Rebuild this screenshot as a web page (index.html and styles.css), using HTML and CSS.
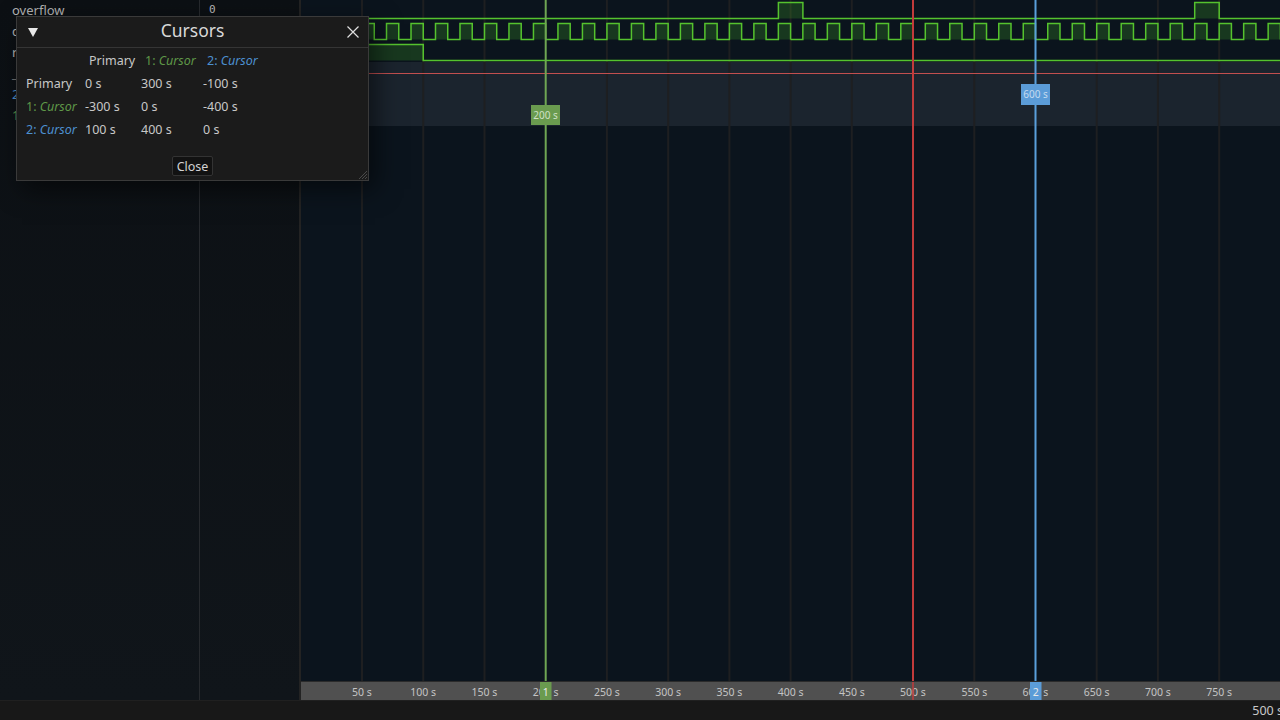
FILE: index.html
```
<!DOCTYPE html>
<html>
<head>
<meta charset="utf-8">
<link rel="stylesheet" href="styles.css">
</head>
<body>
<div class="app">
  <div class="main">
    <div class="names">
      <div class="row">overflow</div>
      <div class="row">clk</div>
      <div class="row">reset</div>
      <div class="row row-div">_____</div>
      <div class="row c-blue">2: <i>Cursor</i></div>
      <div class="row c-green">1: <i>Cursor</i></div>
    </div>
    <div class="values">
      <div class="vrow">0</div>
      <div class="vrow">1</div>
      <div class="vrow">0</div>
    </div>
    <div class="wave">
      <div class="canvas">
        <svg width="979" height="681" viewBox="301 0 979 681">
          <rect x="301" y="0" width="979" height="681" fill="#0b141d"/>
          <rect x="301" y="62" width="979" height="64" fill="#1b242e"/>
          <g stroke="#1e1f21" stroke-width="2">
            <line x1="362" y1="0" x2="362" y2="681"/>
            <line x1="423.25" y1="0" x2="423.25" y2="681"/>
            <line x1="484.5" y1="0" x2="484.5" y2="681"/>
            <line x1="606.9" y1="0" x2="606.9" y2="681"/>
            <line x1="668.2" y1="0" x2="668.2" y2="681"/>
            <line x1="729.4" y1="0" x2="729.4" y2="681"/>
            <line x1="790.6" y1="0" x2="790.6" y2="681"/>
            <line x1="851.8" y1="0" x2="851.8" y2="681"/>
            <line x1="974.3" y1="0" x2="974.3" y2="681"/>
            <line x1="1096.7" y1="0" x2="1096.7" y2="681"/>
            <line x1="1157.9" y1="0" x2="1157.9" y2="681"/>
            <line x1="1219.2" y1="0" x2="1219.2" y2="681"/>
          </g>
          <line x1="301" y1="73.5" x2="1280" y2="73.5" stroke="#c24f4f" stroke-width="1"/>
          <!-- overflow -->
          <rect x="778.4" y="2.5" width="24.5" height="16" fill="rgba(80,200,40,0.2)"/>
          <rect x="1194.7" y="2.5" width="24.5" height="16" fill="rgba(80,200,40,0.2)"/>
          <path d="M301 18.5 H778.4 V2.5 H802.9 V18.5 H1194.7 V2.5 H1219.2 V18.5 H1280" fill="none" stroke="#55c22e" stroke-width="1.5"/>
          <!-- clk: 4 groups of 10 periods, each group 244.9px -->
          <g id="clkgrp">
            <path fill="rgba(80,200,40,0.2)" d="M313.045 23.5h12.245v16h-12.245z m24.49 0h12.245v16h-12.245z m24.49 0h12.245v16h-12.245z m24.49 0h12.245v16h-12.245z m24.49 0h12.245v16h-12.245z m24.49 0h12.245v16h-12.245z m24.49 0h12.245v16h-12.245z m24.49 0h12.245v16h-12.245z m24.49 0h12.245v16h-12.245z m24.49 0h12.245v16h-12.245z"/>
            <path fill="none" stroke="#55c22e" stroke-width="1.5" d="M300.8 39.5h12.245v-16h12.245v16h12.245v-16h12.245v16h12.245v-16h12.245v16h12.245v-16h12.245v16h12.245v-16h12.245v16h12.245v-16h12.245v16h12.245v-16h12.245v16h12.245v-16h12.245v16h12.245v-16h12.245v16h12.245v-16h12.245v16"/>
          </g>
          <use href="#clkgrp" x="244.9" y="0"/>
          <use href="#clkgrp" x="489.8" y="0"/>
          <use href="#clkgrp" x="734.7" y="0"/>
          <!-- reset -->
          <rect x="301" y="44.5" width="122.25" height="16" fill="rgba(80,200,40,0.2)"/>
          <path d="M301 44.5 H423.25 V60.5 H1280" fill="none" stroke="#55c22e" stroke-width="1.5"/>
          <!-- cursors -->
          <line x1="545.7" y1="0" x2="545.7" y2="681" stroke="#6fa653" stroke-width="2"/>
          <line x1="913" y1="0" x2="913" y2="681" stroke="#c23b3b" stroke-width="2"/>
          <line x1="1035.5" y1="0" x2="1035.5" y2="681" stroke="#5a9fdb" stroke-width="2"/>
          <rect x="531" y="105" width="29" height="20" fill="#6a9b4f"/>
          <text x="545.5" y="114.5" class="clabel clabel-g">200 s</text>
          <rect x="1021" y="84" width="29" height="21" fill="#5b9cd8"/>
          <text x="1035.5" y="93.5" class="clabel clabel-b">600 s</text>
        </svg>
      </div>
      <div class="ruler">
        <svg width="979" height="18" viewBox="301 0 979 18">
          <g class="tick">
            <text x="362" y="9.5">50 s</text>
            <text x="423.25" y="9.5">100 s</text>
            <text x="484.5" y="9.5">150 s</text>
            <text x="545.7" y="9.5">200 s</text>
            <text x="606.9" y="9.5">250 s</text>
            <text x="668.2" y="9.5">300 s</text>
            <text x="729.4" y="9.5">350 s</text>
            <text x="790.6" y="9.5">400 s</text>
            <text x="851.8" y="9.5">450 s</text>
            <text x="913" y="9.5">500 s</text>
            <text x="974.3" y="9.5">550 s</text>
            <text x="1035.5" y="9.5">600 s</text>
            <text x="1096.7" y="9.5">650 s</text>
            <text x="1157.9" y="9.5">700 s</text>
            <text x="1219.2" y="9.5">750 s</text>
          </g>
          <line x1="913" y1="0" x2="913" y2="18" stroke="#c23b3b" stroke-width="1.5"/>
          <rect x="540" y="0" width="11.5" height="18" fill="#6a9b4f"/>
          <text x="545.7" y="9.5" class="mark">1</text>
          <rect x="1030" y="0" width="11.5" height="18" fill="#5b9cd8"/>
          <text x="1035.7" y="9.5" class="mark">2</text>
        </svg>
      </div>
    </div>
  </div>
  <div class="status"><span class="status-time">500 s</span></div>

  <div class="dialog">
    <div class="dlg-head">
      <svg class="dlg-tri" width="12" height="12" viewBox="0 0 12 12"><polygon points="1,2 11,2 6,11" fill="#e8e8e8"/></svg>
      <div class="dlg-title">Cursors</div>
      <svg class="dlg-x" width="14" height="14" viewBox="0 0 14 14"><path d="M1.5 1.5 L12.5 12.5 M12.5 1.5 L1.5 12.5" stroke="#e0e0e0" stroke-width="1.2" fill="none"/></svg>
    </div>
    <div class="dlg-body">
      <div class="grid">
        <div></div>
        <div class="hd">Primary</div>
        <div class="hd c-green">1: <i>Cursor</i></div>
        <div class="hd c-blue">2: <i>Cursor</i></div>

        <div>Primary</div><div>0 s</div><div>300 s</div><div>-100 s</div>
        <div class="c-green">1: <i>Cursor</i></div><div>-300 s</div><div>0 s</div><div>-400 s</div>
        <div class="c-blue">2: <i>Cursor</i></div><div>100 s</div><div>400 s</div><div>0 s</div>
      </div>
      <div class="btn-row"><button class="btn">Close</button></div>
    </div>
    <svg class="grip" width="12" height="12" viewBox="0 0 12 12"><path d="M11 3 L3 11 M11 6 L6 11 M11 9 L9 11" stroke="#4a4a4a" stroke-width="1"/></svg>
  </div>
</div>
</body>
</html>
```
FILE: styles.css
```
* { box-sizing: border-box; }
html, body { margin: 0; padding: 0; }
body {
  width: 1280px;
  height: 720px;
  overflow: hidden;
  background: #181818;
  font-family: "Noto Sans", "Open Sans", "DejaVu Sans", sans-serif;
  color: #c8c8c8;
}
.app {
  position: relative;
  width: 1280px;
  height: 720px;
  display: flex;
  flex-direction: column;
}
.main {
  display: flex;
  height: 701px;
  border-bottom: 1px solid #202020;
}
.names {
  width: 200px;
  border-right: 1px solid #272a2e;
  background: linear-gradient(180deg, #0c1014 0%, #10151a 100%);
}
.row {
  height: 21px;
  line-height: 20px;
  padding-left: 12px;
  font-size: 13px;
  color: #b4b4b4;
  white-space: nowrap;
}
.row-div { color: #808080; }
.values {
  width: 101px;
  border-right: 2px solid #232323;
  background: linear-gradient(180deg, #0c1014 0%, #10151a 100%);
}
.vrow {
  height: 21px;
  line-height: 19px;
  padding-left: 9px;
  font-family: "DejaVu Sans Mono", "Liberation Mono", monospace;
  font-size: 11px;
  color: #bcbcbc;
}
.wave {
  flex: 1;
  display: flex;
  flex-direction: column;
}
.canvas {
  height: 681px;
  overflow: hidden;
}
.canvas svg, .ruler svg { display: block; }
.clabel {
  font-family: "Noto Sans", "DejaVu Sans", sans-serif;
  font-size: 10px;
  text-anchor: middle;
  dominant-baseline: central;
}
.clabel-g { fill: #cfe0c6; }
.clabel-b { fill: #c4daef; }
.ruler {
  height: 19px;
  border-top: 1px solid #2b2b2b;
  background: #505050;
}
.tick text {
  font-family: "Noto Sans", "DejaVu Sans", sans-serif;
  font-size: 10.5px;
  fill: #c4c4c4;
  text-anchor: middle;
  dominant-baseline: central;
}
.mark {
  font-family: "Noto Sans", "DejaVu Sans", sans-serif;
  font-size: 10.5px;
  fill: #e8e8e8;
  text-anchor: middle;
  dominant-baseline: central;
}
.status {
  flex: 1;
  display: flex;
  justify-content: flex-end;
  align-items: center;
  overflow: hidden;
}
.status-time {
  font-size: 12.5px;
  color: #c8c8c8;
  margin-right: -3px;
  white-space: nowrap;
}
.c-green { color: #5f9848; }
.c-blue { color: #4d90d0; }
i { font-style: italic; }

.dialog {
  position: absolute;
  left: 16px;
  top: 16px;
  width: 353px;
  height: 165px;
  background: #1b1b1b;
  border: 1px solid #3a3a3a;
  box-shadow: 6px 8px 24px rgba(0, 0, 0, 0.55);
}
.dlg-head {
  height: 31px;
  border-bottom: 1px solid #353535;
  display: flex;
  align-items: center;
  justify-content: space-between;
  padding: 0 10px 0 10px;
}
.dlg-title {
  font-size: 17.5px;
  color: #d8d8d8;
  margin-top: -4px;
}
.dlg-head .dlg-x { margin-right: -2px; }
.dlg-body {
  padding: 1px 0 0 9px;
}
.grid {
  display: grid;
  grid-template-columns: 59px 56px 62px 80px;
  grid-auto-rows: 23px;
  align-items: center;
  font-size: 12.5px;
  color: #c8c8c8;
  white-space: nowrap;
}
.hd { padding-left: 4px; }
.btn-row {
  display: flex;
  justify-content: center;
  margin-top: 15px;
  padding-right: 9px;
}
.btn {
  height: 20px;
  padding: 0 4px;
  background: #121212;
  border: 1px solid #333333;
  border-radius: 2px;
  color: #d2d2d2;
  font-family: "Noto Sans", "Open Sans", "DejaVu Sans", sans-serif;
  font-size: 12.5px;
  line-height: 17px;
}
.grip {
  position: absolute;
  right: 0;
  bottom: 0;
}
```
